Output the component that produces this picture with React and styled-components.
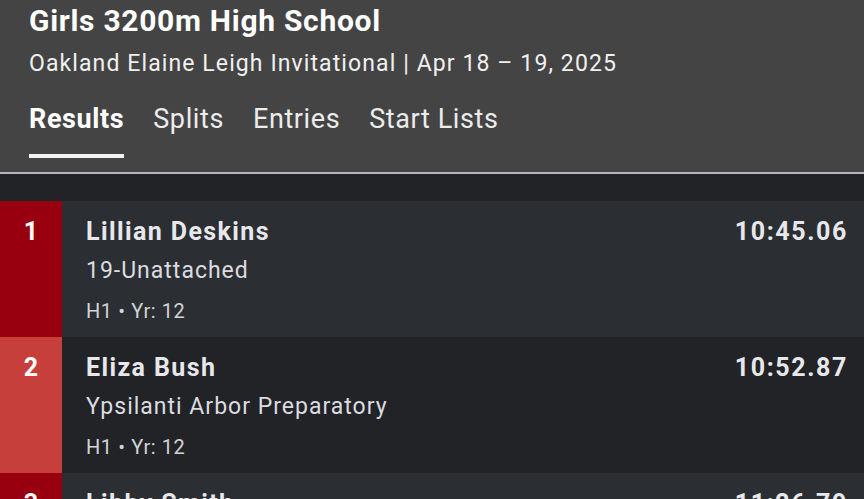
import React from 'react';
import styled, { createGlobalStyle } from 'styled-components';

const GlobalStyle = createGlobalStyle`
  body {
    margin: 0;
    background: #212327;
    font-family: Roboto, "Noto Sans", sans-serif;
    overflow: hidden;
  }
`;

const Header = styled.header`
  box-sizing: border-box;
  height: 174px;
  background: #444444;
  padding: 4px 29px 0;
  border-bottom: 2px solid #b3b3bb;
`;

const Title = styled.h1`
  margin: 0;
  font-size: 30px;
  line-height: 34px;
  font-weight: 700;
  letter-spacing: 0.7px;
  color: #ffffff;
`;

const Subtitle = styled.div`
  margin-top: 12px;
  font-size: 23px;
  line-height: 28px;
  letter-spacing: 1.1px;
  color: #f0f0f0;
`;

const Tabs = styled.nav`
  display: flex;
  gap: 29px;
  margin-top: 25px;
`;

const Tab = styled.div`
  font-size: 27px;
  line-height: 32px;
  letter-spacing: 0.6px;
  font-weight: ${(p) => (p.active ? 700 : 400)};
  color: ${(p) => (p.active ? '#ffffff' : '#ececec')};
  padding-bottom: 19px;
  border-bottom: 4px solid ${(p) => (p.active ? '#f4f4f4' : 'transparent')};
`;

const Band = styled.div`
  height: 27px;
  background: #212327;
`;

const Row = styled.div`
  display: flex;
  height: 136px;
  background: ${(p) => (p.odd ? '#2b2e32' : '#212327')};
`;

const Rank = styled.div`
  box-sizing: border-box;
  width: 62px;
  flex-shrink: 0;
  padding-top: 16px;
  background: ${(p) => p.color};
  color: #ffffff;
  font-weight: 700;
  font-size: 25px;
  line-height: 30px;
  text-align: center;
`;

const Body = styled.div`
  flex: 1;
  display: flex;
  justify-content: space-between;
  padding: 16px 16px 0 24px;
`;

const Info = styled.div`
  display: flex;
  flex-direction: column;
`;

const Name = styled.div`
  font-size: 25px;
  line-height: 30px;
  font-weight: 700;
  letter-spacing: 1.4px;
  color: #e8e8ec;
`;

const Team = styled.div`
  margin-top: 10px;
  font-size: 23px;
  line-height: 28px;
  letter-spacing: 1px;
  color: #dcdce0;
`;

const Meta = styled.div`
  margin-top: 13px;
  font-size: 20px;
  line-height: 26px;
  letter-spacing: 0.6px;
  color: #d4d4d8;
`;

const Time = styled.div`
  font-size: 25px;
  line-height: 30px;
  font-weight: 700;
  letter-spacing: 1.6px;
  color: #e8e8ec;
`;

const results = [
  { place: 1, name: 'Lillian Deskins', team: '19-Unattached', meta: 'H1 • Yr: 12', time: '10:45.06', color: '#98000f' },
  { place: 2, name: 'Eliza Bush', team: 'Ypsilanti Arbor Preparatory', meta: 'H1 • Yr: 12', time: '10:52.87', color: '#c73f3b' },
  { place: 3, name: 'Libby Smith', team: '', meta: '', time: '11:26.79', color: '#98000f' },
];

const tabs = ['Results', 'Splits', 'Entries', 'Start Lists'];

export default function App() {
  return (
    <>
      <GlobalStyle />
      <Header>
        <Title>Girls 3200m High School</Title>
        <Subtitle>Oakland Elaine Leigh Invitational | Apr 18 – 19, 2025</Subtitle>
        <Tabs>
          {tabs.map((t, i) => (
            <Tab key={t} active={i === 0}>{t}</Tab>
          ))}
        </Tabs>
      </Header>
      <Band />
      {results.map((r, i) => (
        <Row key={r.place} odd={i % 2 === 0}>
          <Rank color={r.color}>{r.place}</Rank>
          <Body>
            <Info>
              <Name>{r.name}</Name>
              <Team>{r.team}</Team>
              <Meta>{r.meta}</Meta>
            </Info>
            <Time>{r.time}</Time>
          </Body>
        </Row>
      ))}
    </>
  );
}
